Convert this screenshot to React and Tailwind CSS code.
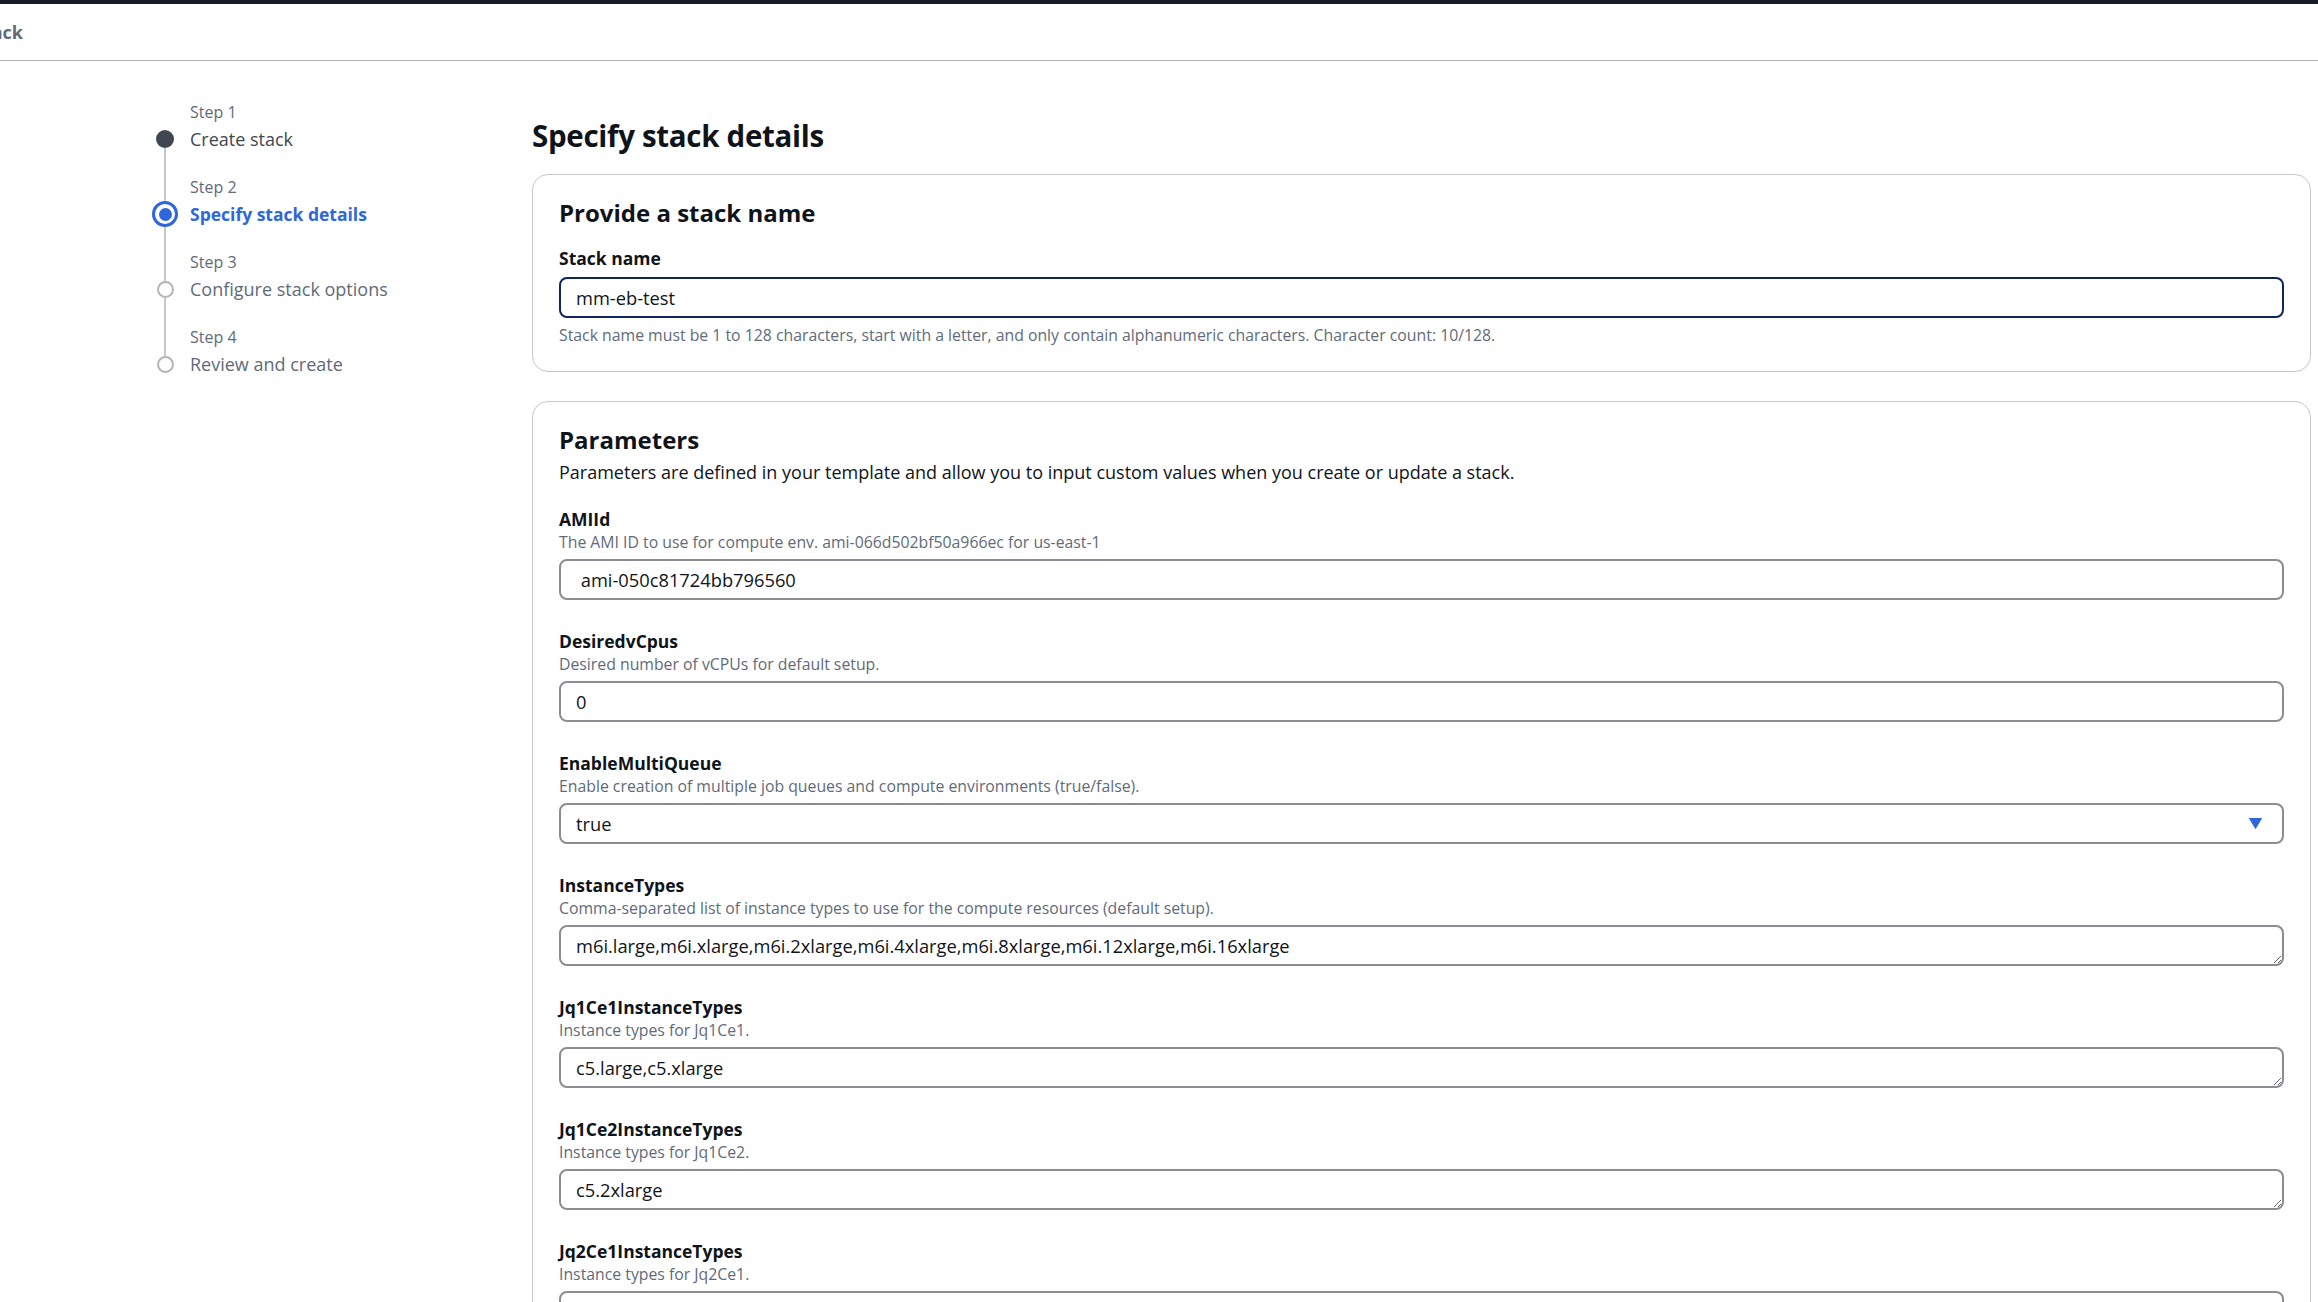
import React from 'react';

const steps = [
  { n: 1, title: 'Create stack', state: 'done' },
  { n: 2, title: 'Specify stack details', state: 'active' },
  { n: 3, title: 'Configure stack options', state: 'todo' },
  { n: 4, title: 'Review and create', state: 'todo' },
];

const params = [
  {
    name: 'AMIId',
    desc: 'The AMI ID to use for compute env. ami-066d502bf50a966ec for us-east-1',
    value: ' ami-050c81724bb796560',
    kind: 'input',
  },
  { name: 'DesiredvCpus', desc: 'Desired number of vCPUs for default setup.', value: '0', kind: 'input' },
  {
    name: 'EnableMultiQueue',
    desc: 'Enable creation of multiple job queues and compute environments (true/false).',
    value: 'true',
    kind: 'select',
  },
  {
    name: 'InstanceTypes',
    desc: 'Comma-separated list of instance types to use for the compute resources (default setup).',
    value: 'm6i.large,m6i.xlarge,m6i.2xlarge,m6i.4xlarge,m6i.8xlarge,m6i.12xlarge,m6i.16xlarge',
    kind: 'textarea',
  },
  { name: 'Jq1Ce1InstanceTypes', desc: 'Instance types for Jq1Ce1.', value: 'c5.large,c5.xlarge', kind: 'textarea' },
  { name: 'Jq1Ce2InstanceTypes', desc: 'Instance types for Jq1Ce2.', value: 'c5.2xlarge', kind: 'textarea' },
  { name: 'Jq2Ce1InstanceTypes', desc: 'Instance types for Jq2Ce1.', value: 'm5.large,m5.xlarge', kind: 'textarea' },
];

const font = { fontFamily: '"Open Sans", "Noto Sans", Arial, sans-serif' };

function StepMarker({ state }) {
  if (state === 'active') {
    return (
      <div className="w-[26px] h-[26px] rounded-full border-[3px] border-[#2f66db] flex items-center justify-center shrink-0">
        <div className="w-[13px] h-[13px] rounded-full bg-[#2f66db]" />
      </div>
    );
  }
  if (state === 'done') {
    return <div className="w-[18px] h-[18px] rounded-full bg-[#414750] shrink-0" />;
  }
  return <div className="w-[17px] h-[17px] rounded-full border-2 border-[#b4b4bb] bg-white shrink-0" />;
}

function Steps() {
  return (
    <nav className="w-[532px] shrink-0 pl-[152px] pt-[20px]">
      {steps.map((s, i) => (
        <div key={s.n} className="grid grid-cols-[26px_1fr] gap-x-[12px]">
          {/* label row */}
          <div className="h-[41px] flex justify-center">
            {i > 0 && <div className="w-[2px] h-full bg-[#c6c6cd]" />}
          </div>
          <div className="h-[41px] flex items-end">
            <span className="text-[16px] leading-[20px] text-[#5f6b7a]">Step {s.n}</span>
          </div>
          {/* title row */}
          <div className="h-[34px] flex flex-col items-center">
            <div className={`w-[2px] flex-1 ${i > 0 ? 'bg-[#c6c6cd]' : ''}`} />
            <StepMarker state={s.state} />
            <div className={`w-[2px] flex-1 ${i < steps.length - 1 ? 'bg-[#c6c6cd]' : ''}`} />
          </div>
          <div className="h-[34px] flex items-center whitespace-nowrap">
            <span
              className={
                s.state === 'active'
                  ? 'text-[17.5px] font-bold text-[#2f66db]'
                  : s.state === 'done'
                  ? 'text-[18px] text-[#414750]'
                  : 'text-[18px] text-[#5f6b7a]'
              }
            >
              {s.title}
            </span>
          </div>
        </div>
      ))}
    </nav>
  );
}

function ResizeField({ value }) {
  return (
    <textarea
      rows={1}
      readOnly
      defaultValue={value}
      className="block w-full h-[41px] min-h-[41px] rounded-[8px] border-2 border-[#8c8c94] bg-white pl-[15px] pr-[15px] py-[6px] text-[18.3px] leading-[25px] text-[#0f141a] outline-none overflow-hidden"
    />
  );
}

function Field({ p }) {
  return (
    <div className="mb-[30px]">
      <div className="text-[17.5px] leading-[22px] font-bold text-[#0f141a]">{p.name}</div>
      <div className="mt-[2px] text-[15.8px] leading-[20px] text-[#5f6b7a]">{p.desc}</div>
      <div className="mt-[7px]">
        {p.kind === 'input' && (
          <div className="h-[41px] rounded-[8px] border-2 border-[#8c8c94] bg-white pl-[15px] flex items-center text-[18.3px] text-[#0f141a] whitespace-pre">
            {p.value}
          </div>
        )}
        {p.kind === 'select' && (
          <div className="h-[41px] rounded-[8px] border-2 border-[#8c8c94] bg-white pl-[15px] pr-[20px] flex items-center justify-between text-[18.3px] text-[#0f141a]">
            <span>{p.value}</span>
            <svg width="13" height="11" viewBox="0 0 13 11">
              <path d="M0.5 0.5 H12.5 L6.5 10.5 Z" fill="#2f66db" stroke="#2f66db" strokeLinejoin="round" />
            </svg>
          </div>
        )}
        {p.kind === 'textarea' && <ResizeField value={p.value} />}
      </div>
    </div>
  );
}

export default function App() {
  return (
    <div className="min-h-screen bg-white overflow-hidden" style={font}>
      <div className="h-[4px] bg-[#161d26]" />
      <header className="h-[57px] border-b border-[#b4b4bb] flex items-center">
        <div className="w-[23px] flex justify-end whitespace-nowrap">
          <span className="text-[18px] font-bold text-[#5f6b7a]">Create stack</span>
        </div>
      </header>

      <div className="flex">
        <Steps />

        <main className="flex-1 min-w-0 pr-[7px] pt-[57px]">
          <h1 className="text-[29.5px] leading-[36px] font-bold text-[#0f141a] tracking-[-0.3px]">Specify stack details</h1>

          <section className="mt-[20px] rounded-[16px] border border-[#c6c6cd] px-[26px] pt-[23px] pb-[26px]">
            <h2 className="text-[24px] leading-[30px] font-bold text-[#0f141a]">Provide a stack name</h2>
            <div className="mt-[19px] text-[17.5px] leading-[22px] font-bold text-[#0f141a]">Stack name</div>
            <div className="mt-[8px] h-[41px] rounded-[8px] border-2 border-[#0f2460] bg-white pl-[15px] flex items-center text-[18.3px] text-[#0f141a]">
              mm-eb-test
            </div>
            <div className="mt-[7px] text-[15.8px] leading-[20px] text-[#5f6b7a]">
              Stack name must be 1 to 128 characters, start with a letter, and only contain alphanumeric characters. Character count: 10/128.
            </div>
          </section>

          <section className="mt-[29px] rounded-[16px] border border-[#c6c6cd] px-[26px] pt-[23px] pb-[26px]">
            <h2 className="text-[24px] leading-[30px] font-bold text-[#0f141a]">Parameters</h2>
            <p className="mt-[6px] text-[18px] leading-[22px] text-[#0f141a]">
              Parameters are defined in your template and allow you to input custom values when you create or update a stack.
            </p>
            <div className="mt-[25px]">
              {params.map((p) => (
                <Field key={p.name} p={p} />
              ))}
            </div>
          </section>
        </main>
      </div>
    </div>
  );
}
